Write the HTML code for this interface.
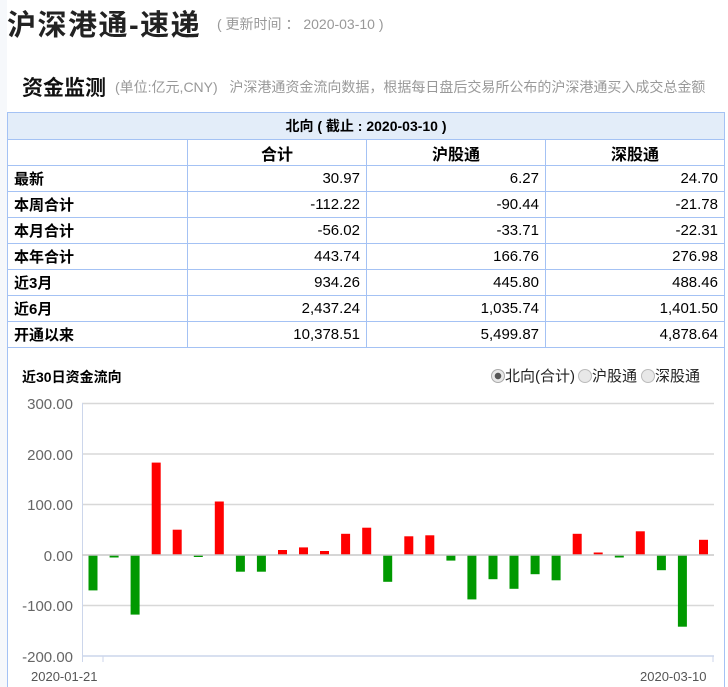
<!DOCTYPE html>
<html><head><meta charset="utf-8"><style>
*{margin:0;padding:0;box-sizing:border-box}
body{width:728px;height:687px;overflow:hidden;background:#fff;font-family:"Liberation Sans","Noto Sans CJK SC",sans-serif;color:#000;position:relative}
.a{position:absolute;white-space:nowrap}
table{position:absolute;left:7px;top:112px;width:718px;border-collapse:collapse;font-size:15px}
td{border:1px solid #a4c2f4;height:26px;padding:0 6px;text-align:right}
td:first-child{text-align:left;font-weight:bold}
tr.h td{background:#e3edf9;text-align:center;font-weight:bold;font-size:14px;height:27px}
tr.c td{text-align:center;font-weight:bold;font-size:16px}
</style></head><body>
<div class="a" style="left:0;top:0;width:7px;height:687px;background:#f6f8fb"></div>
<div class="a" style="left:7px;top:2px;font-size:29px;font-weight:bold;color:#222;letter-spacing:1.5px">沪深港通-速递</div>
<div class="a" style="left:217px;top:14px;font-size:14px;color:#999">( 更新时间 ： 2020-03-10 )</div>
<div class="a" style="left:22px;top:72px;font-size:21px;font-weight:bold;color:#111">资金监测</div>
<div class="a" style="left:115px;top:77px;font-size:14px;color:#999">(单位:亿元,CNY)&nbsp;&nbsp; 沪深港通资金流向数据，根据每日盘后交易所公布的沪深港通买入成交总金额</div>
<table>
<tr class="h"><td colspan="4" style="text-align:center">北向 ( 截止 : 2020-03-10 )</td></tr>
<tr class="c"><td style="width:180px"></td><td style="width:179px">合计</td><td style="width:179px">沪股通</td><td>深股通</td></tr>
<tr><td>最新</td><td>30.97</td><td>6.27</td><td>24.70</td></tr>
<tr><td>本周合计</td><td>-112.22</td><td>-90.44</td><td>-21.78</td></tr>
<tr><td>本月合计</td><td>-56.02</td><td>-33.71</td><td>-22.31</td></tr>
<tr><td>本年合计</td><td>443.74</td><td>166.76</td><td>276.98</td></tr>
<tr><td>近3月</td><td>934.26</td><td>445.80</td><td>488.46</td></tr>
<tr><td>近6月</td><td>2,437.24</td><td>1,035.74</td><td>1,401.50</td></tr>
<tr><td>开通以来</td><td>10,378.51</td><td>5,499.87</td><td>4,878.64</td></tr>
</table>
<div class="a" style="left:7px;top:347px;width:1px;height:340px;background:#a4c2f4"></div>
<div class="a" style="left:724px;top:347px;width:1px;height:340px;background:#a4c2f4"></div>
<div class="a" style="left:22px;top:367px;font-size:14px;font-weight:bold">近30日资金流向</div>
<div class="a" style="left:491px;top:365px;font-size:15px;color:#222">
<span style="display:inline-block;width:14px;height:14px;border-radius:50%;border:1px solid #aaa;background:radial-gradient(#555 0 3px,#e8e8e8 3.5px);vertical-align:-2px"></span>北向(合计)<span style="display:inline-block;width:14px;height:14px;border-radius:50%;border:1px solid #bbb;background:#e8e8e8;vertical-align:-2px;margin-left:3px"></span>沪股通<span style="display:inline-block;width:14px;height:14px;border-radius:50%;border:1px solid #bbb;background:#e8e8e8;vertical-align:-2px;margin-left:4px"></span>深股通</div>
<svg class="a" style="left:0;top:0" width="728" height="687">
<g stroke="#d8d8d8" stroke-width="1.5">
<line x1="82" y1="403.5" x2="714" y2="403.5"/><line x1="82" y1="454" x2="714" y2="454"/><line x1="82" y1="504.5" x2="714" y2="504.5"/><line x1="82" y1="605.5" x2="714" y2="605.5"/>
</g>
<line x1="82" y1="656" x2="714" y2="656" stroke="#ccd6eb" stroke-width="1.5"/>
<line x1="82.5" y1="403" x2="82.5" y2="662" stroke="#ccd6eb"/>
<line x1="103" y1="656" x2="103" y2="662" stroke="#ccd6eb"/>
<line x1="713" y1="656" x2="713" y2="662" stroke="#ccd6eb"/>
<g font-family="Liberation Sans,sans-serif" font-size="15" fill="#666" text-anchor="end">
<text x="73" y="409">300.00</text><text x="73" y="460">200.00</text><text x="73" y="510">100.00</text><text x="73" y="561">0.00</text><text x="73" y="611">-100.00</text><text x="73" y="662">-200.00</text>
</g>
<g font-family="Liberation Sans,sans-serif" font-size="13" fill="#555">
<text x="31" y="681">2020-01-21</text><text x="640" y="681">2020-03-10</text>
</g>
<g fill="#009900">
<rect x="88.5" y="555" width="9" height="35.4"/><rect x="109.6" y="555" width="9" height="2.5"/><rect x="130.6" y="555" width="9" height="59.6"/>
<rect x="193.8" y="555" width="9" height="2"/><rect x="235.9" y="555" width="9" height="16.7"/><rect x="256.9" y="555" width="9" height="16.7"/>
<rect x="383.2" y="555" width="9" height="26.8"/><rect x="446.4" y="555" width="9" height="5.6"/><rect x="467.4" y="555" width="9" height="44.4"/>
<rect x="488.5" y="555" width="9" height="24.2"/><rect x="509.5" y="555" width="9" height="33.8"/><rect x="530.6" y="555" width="9" height="19.2"/>
<rect x="551.6" y="555" width="9" height="25.3"/><rect x="614.8" y="555" width="9" height="2.5"/><rect x="656.9" y="555" width="9" height="15.2"/>
<rect x="677.9" y="555" width="9" height="71.7"/>
</g>
<g fill="#ff0000">
<rect x="151.7" y="462.6" width="9" height="92.4"/><rect x="172.7" y="529.7" width="9" height="25.3"/><rect x="214.8" y="501.5" width="9" height="53.5"/>
<rect x="278" y="550" width="9" height="5"/><rect x="299" y="547.4" width="9" height="7.6"/><rect x="320" y="551" width="9" height="4"/>
<rect x="341.1" y="533.8" width="9" height="21.2"/><rect x="362.2" y="527.7" width="9" height="27.3"/><rect x="404.3" y="536.3" width="9" height="18.7"/>
<rect x="425.3" y="535.3" width="9" height="19.7"/><rect x="572.7" y="533.8" width="9" height="21.2"/><rect x="593.7" y="552.5" width="9" height="2.5"/>
<rect x="635.8" y="531.3" width="9" height="23.7"/><rect x="699" y="539.8" width="9" height="15.2"/>
</g>
<line x1="82" y1="555" x2="714" y2="555" stroke="#c8c8c8" stroke-width="1.5"/>
</svg>
</body></html>
